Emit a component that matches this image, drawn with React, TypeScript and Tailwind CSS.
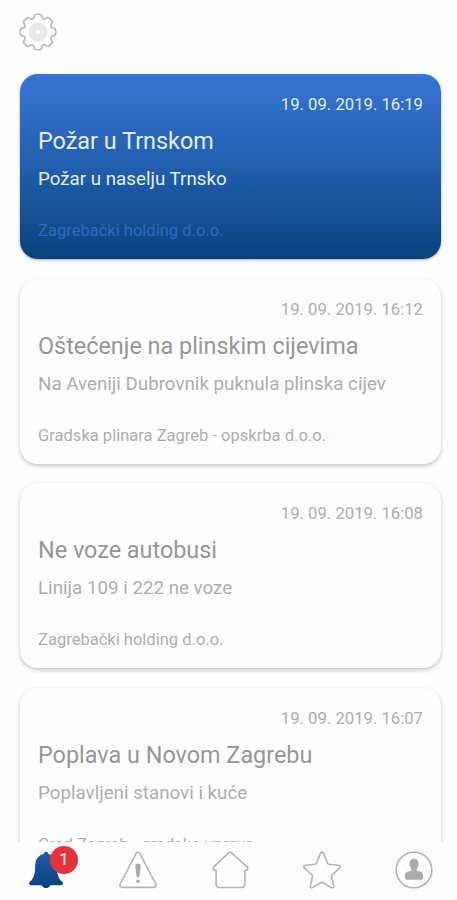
import clsx from 'clsx'

type Notice = {
  id: number
  date: string
  title: string
  description: string
  source: string
  unread?: boolean
}

const notices: Notice[] = [
  { id: 1, date: '19. 09. 2019. 16:19', title: 'Požar u Trnskom', description: 'Požar u naselju Trnsko', source: 'Zagrebački holding d.o.o.', unread: true },
  { id: 2, date: '19. 09. 2019. 16:12', title: 'Oštećenje na plinskim cijevima', description: 'Na Aveniji Dubrovnik puknula plinska cijev', source: 'Gradska plinara Zagreb - opskrba d.o.o.' },
  { id: 3, date: '19. 09. 2019. 16:08', title: 'Ne voze autobusi', description: 'Linija 109 i 222 ne voze', source: 'Zagrebački holding d.o.o.' },
  { id: 4, date: '19. 09. 2019. 16:07', title: 'Poplava u Novom Zagrebu', description: 'Poplavljeni stanovi i kuće', source: 'Grad Zagreb - gradska uprava' },
]

// Outline of the cog: two outer and two inner points per tooth, smoothed through their midpoints
const cogPath = (teeth: number, cx: number) => {
  const pts: number[][] = []
  for (let i = 0; i < teeth; i++) {
    const a = (i * 360) / teeth
    for (const [offset, r] of [[-15, 14.2], [-12.5, 18.3], [12.5, 18.3], [15, 14.2]]) {
      const rad = ((a + offset) * Math.PI) / 180
      pts.push([cx + r * Math.cos(rad), cx + r * Math.sin(rad)])
    }
  }
  const mid = (p: number[], q: number[]) => `${((p[0] + q[0]) / 2).toFixed(2)} ${((p[1] + q[1]) / 2).toFixed(2)}`
  return `M${mid(pts[pts.length - 1], pts[0])}` + pts.map((p, i) => `Q${p[0].toFixed(2)} ${p[1].toFixed(2)} ${mid(p, pts[(i + 1) % pts.length])}`).join('') + 'Z'
}

const iconClass = 'block h-[38px] w-[38px]'

function CogIcon() {
  return (
    <svg viewBox="0 0 38 38" className={iconClass} fill="none">
      <path d={cogPath(8, 19)} stroke="#b4b4b4" strokeWidth="1.5" strokeLinejoin="round" />
      <circle cx="19" cy="19" r="5.8" stroke="#e8e8e8" strokeWidth="7.4" />
    </svg>
  )
}

function BellIcon() {
  return (
    <svg viewBox="0 0 38 38" className={iconClass}>
      <defs>
        <linearGradient id="bell" x1="0" y1="0" x2="0" y2="1">
          <stop offset="0" stopColor="#1f5cad" />
          <stop offset="1" stopColor="#08427f" />
        </linearGradient>
      </defs>
      <path
        fill="url(#bell)"
        d="M19 .8c1.3 0 2 .9 2.2 2.2C27 4.300 29.600 8.500 29.800 14.500c.2 8.500 1.200 12.800 5.600 16.600 1.400 1.300.7 3.100-1.100 3.100H23.200c-.6 1.800-2.100 2.900-4.200 2.900s-3.600-1.100-4.200-2.900H3.700c-1.800 0-2.500-1.800-1.100-3.100 4.400-3.800 5.400-8.100 5.600-16.600C8.400 8.500 11 4.300 16.800 3c.2-1.300.9-2.200 2.200-2.200z"
      />
    </svg>
  )
}

function WarningIcon() {
  return (
    <svg viewBox="0 0 38 38" className={iconClass} fill="none">
      <path d="M17.200 2.300c.8-1.400 2.800-1.400 3.600 0l15.900 30.600c.9 1.900.1 3.500-2 3.500H3.300c-2.100 0-2.900-1.600-2-3.500z" stroke="#b4b4b4" strokeWidth="1.6" />
      <path d="M19 12.500c1.900 0 2.900 1.200 2.700 2.900l-1.200 9.600c-.2 1.700-2.800 1.700-3 0l-1.200-9.600c-.2-1.700.8-2.900 2.700-2.900z" fill="#a8a8a8" />
      <circle cx="19" cy="30.200" r="1.800" fill="#a8a8a8" />
    </svg>
  )
}

function HomeIcon() {
  return (
    <svg viewBox="0 0 38 38" className={iconClass} fill="none">
      <path
        d="M17.500 1.900c1-.9 2-.9 3 0l15.200 13.500c1.900 1.700 1.300 4-.9 4h-.9v14.100c0 1.900-1.100 3-3 3H8.100c-1.900 0-3-1.100-3-3V19.400h-.9c-2.200 0-2.800-2.300-.9-4z"
        stroke="#b4b4b4"
        strokeWidth="1.6"
        strokeLinejoin="round"
      />
    </svg>
  )
}

function StarIcon() {
  return (
    <svg viewBox="0 0 38 38" className={iconClass} fill="none">
      <path
        d="M17.700 1.900c.6-1.200 2-1.200 2.600 0l4.300 10.400c.2.500.6.8 1.200.9l9.800 1c1.600.2 2.100 1.800.9 2.900l-7.600 6.900c-.4.400-.6.900-.5 1.500l2.300 9.500c.3 1.500-.9 2.300-2.200 1.600l-8.700-5.100c-.5-.3-1.100-.3-1.600 0l-8.700 5.100c-1.300.7-2.500-.1-2.200-1.600l2.300-9.500c.1-.6-.1-1.100-.5-1.500l-7.600-6.900c-1.200-1.100-.7-2.700.9-2.900l9.800-1c.6-.1 1-.4 1.200-.9z"
        stroke="#b4b4b4"
        strokeWidth="1.6"
        strokeLinejoin="round"
      />
    </svg>
  )
}

function ProfileIcon() {
  return (
    <svg viewBox="0 0 38 38" className={iconClass} fill="none">
      <circle cx="19" cy="19" r="17.8" stroke="#b4b4b4" strokeWidth="1.6" />
      <path
        d="M19 7.800c3 0 4.600 1.900 4.500 5-.1 2.500-.9 4.300-2 5.400v1.200c1.200.9 3.100.9 4.500 1.400 1.700.7 2.300 2.500 2.200 5.600-.1 1.500-.9 2.300-2.300 2.300H12.100c-1.400 0-2.200-.8-2.300-2.300-.1-3.100.5-4.900 2.200-5.600 1.400-.5 3.300-.5 4.500-1.400v-1.200c-1.100-1.100-1.900-2.900-2-5.400-.1-3.100 1.500-5 4.500-5z"
        fill="#ababab"
      />
    </svg>
  )
}

function NoticeCard({ notice }: { notice: Notice }) {
  const { unread } = notice
  return (
    <article
      className={clsx(
        'h-[185px] shrink-0 whitespace-nowrap rounded-[18px] px-[18px] pt-[19px]',
        unread
          ? 'bg-linear-to-b from-[#3575d3] via-[#215fad] to-[#07427d] text-[#e4eeff] shadow-[0_1px_3px_rgba(0,0,60,0.35)]'
          : 'bg-[#fefefe] text-[#adadad] shadow-[0_2px_4px_rgba(0,0,0,0.24)]'
      )}
    >
      <p className="text-right text-[16.7px] leading-[24px]">{notice.date}</p>
      <h2 className={clsx('mt-[8px] text-[23.4px] leading-[32px]', !unread && 'text-[#969696]')}>{notice.title}</h2>
      <p className="mt-[10px] text-[18.75px] leading-[24px]">{notice.description}</p>
      <p className={clsx('mt-[30px] text-[16.55px] leading-[20px]', unread && 'text-[#2f69b8]')}>{notice.source}</p>
    </article>
  )
}

export default function App() {
  return (
    <div className="flex h-[900px] w-[457px] flex-col overflow-hidden bg-[#fefefe] font-[Roboto,sans-serif]">
      <header className="flex h-[74px] shrink-0 items-start px-[19px] pt-[13px]">
        <button aria-label="Postavke">
          <CogIcon />
        </button>
      </header>

      {/* The list is cut off by the tab bar; the negative margin leaves room for the first card's shadow */}
      <main className="-mt-2 flex min-h-0 flex-1 flex-col gap-[19.5px] overflow-hidden pt-2 pr-4 pl-5">
        {notices.map(notice => (
          <NoticeCard key={notice.id} notice={notice} />
        ))}
      </main>

      <nav className="flex h-[58px] shrink-0 items-start justify-between bg-[#fefefe] pt-[9px] pr-6 pl-[27px]">
        <button aria-label="Obavijesti" className="relative">
          <BellIcon />
          <span className="absolute -top-[5px] left-[23px] flex size-[28px] items-center justify-center rounded-full bg-[#e5333b] text-[17px] text-white">1</span>
        </button>
        <button aria-label="Upozorenja"><WarningIcon /></button>
        <button aria-label="Početna"><HomeIcon /></button>
        <button aria-label="Favoriti"><StarIcon /></button>
        <button aria-label="Profil"><ProfileIcon /></button>
      </nav>
    </div>
  )
}
